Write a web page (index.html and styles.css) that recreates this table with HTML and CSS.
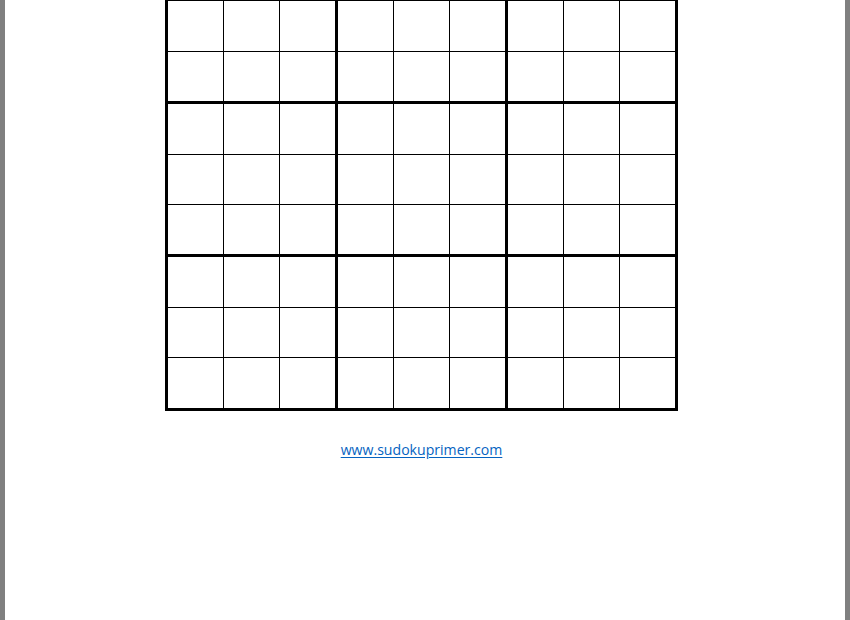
FILE: index.html
```html
<!DOCTYPE html>
<html lang="en">
<head>
<meta charset="utf-8">
<title>Sudoku</title>
<link rel="stylesheet" href="styles.css">
</head>
<body>
<div class="page">
  <div class="sheet">
    <div class="sudoku">
      <div class="box"><div class="cell"></div><div class="cell"></div><div class="cell"></div><div class="cell"></div><div class="cell"></div><div class="cell"></div><div class="cell"></div><div class="cell"></div><div class="cell"></div></div>
      <div class="box"><div class="cell"></div><div class="cell"></div><div class="cell"></div><div class="cell"></div><div class="cell"></div><div class="cell"></div><div class="cell"></div><div class="cell"></div><div class="cell"></div></div>
      <div class="box"><div class="cell"></div><div class="cell"></div><div class="cell"></div><div class="cell"></div><div class="cell"></div><div class="cell"></div><div class="cell"></div><div class="cell"></div><div class="cell"></div></div>
      <div class="box"><div class="cell"></div><div class="cell"></div><div class="cell"></div><div class="cell"></div><div class="cell"></div><div class="cell"></div><div class="cell"></div><div class="cell"></div><div class="cell"></div></div>
      <div class="box"><div class="cell"></div><div class="cell"></div><div class="cell"></div><div class="cell"></div><div class="cell"></div><div class="cell"></div><div class="cell"></div><div class="cell"></div><div class="cell"></div></div>
      <div class="box"><div class="cell"></div><div class="cell"></div><div class="cell"></div><div class="cell"></div><div class="cell"></div><div class="cell"></div><div class="cell"></div><div class="cell"></div><div class="cell"></div></div>
      <div class="box"><div class="cell"></div><div class="cell"></div><div class="cell"></div><div class="cell"></div><div class="cell"></div><div class="cell"></div><div class="cell"></div><div class="cell"></div><div class="cell"></div></div>
      <div class="box"><div class="cell"></div><div class="cell"></div><div class="cell"></div><div class="cell"></div><div class="cell"></div><div class="cell"></div><div class="cell"></div><div class="cell"></div><div class="cell"></div></div>
      <div class="box"><div class="cell"></div><div class="cell"></div><div class="cell"></div><div class="cell"></div><div class="cell"></div><div class="cell"></div><div class="cell"></div><div class="cell"></div><div class="cell"></div></div>
    </div>
    <a class="site-link" href="#">www.sudokuprimer.com</a>
  </div>
</div>
</body>
</html>
```

FILE: styles.css
```css
html, body {
  margin: 0;
  padding: 0;
  height: 100%;
  overflow: hidden;
}

body {
  background: #808080;
  font-family: "Open Sans", "Liberation Sans", sans-serif;
}

.page {
  margin: 0 5px;
  height: 620px;
  background: #ffffff;
  overflow: hidden;
}

.sheet {
  display: flex;
  flex-direction: column;
  align-items: center;
  padding: 0 167px 0 160px;
  margin-top: -52px;
}

.sudoku {
  display: grid;
  grid-template-columns: repeat(3, auto);
  gap: 3px;
  padding: 3px;
  background: #000000;
}

.box {
  display: grid;
  grid-template-columns: repeat(3, 55px);
  grid-auto-rows: 49.4px;
  gap: 1px;
  background: #000000;
}

.cell {
  background: #ffffff;
}

.site-link {
  margin-top: 29px;
  font-size: 14.1px;
  line-height: 20px;
  color: #0563c1;
  text-decoration: underline;
  text-underline-offset: 2px;
}
```
